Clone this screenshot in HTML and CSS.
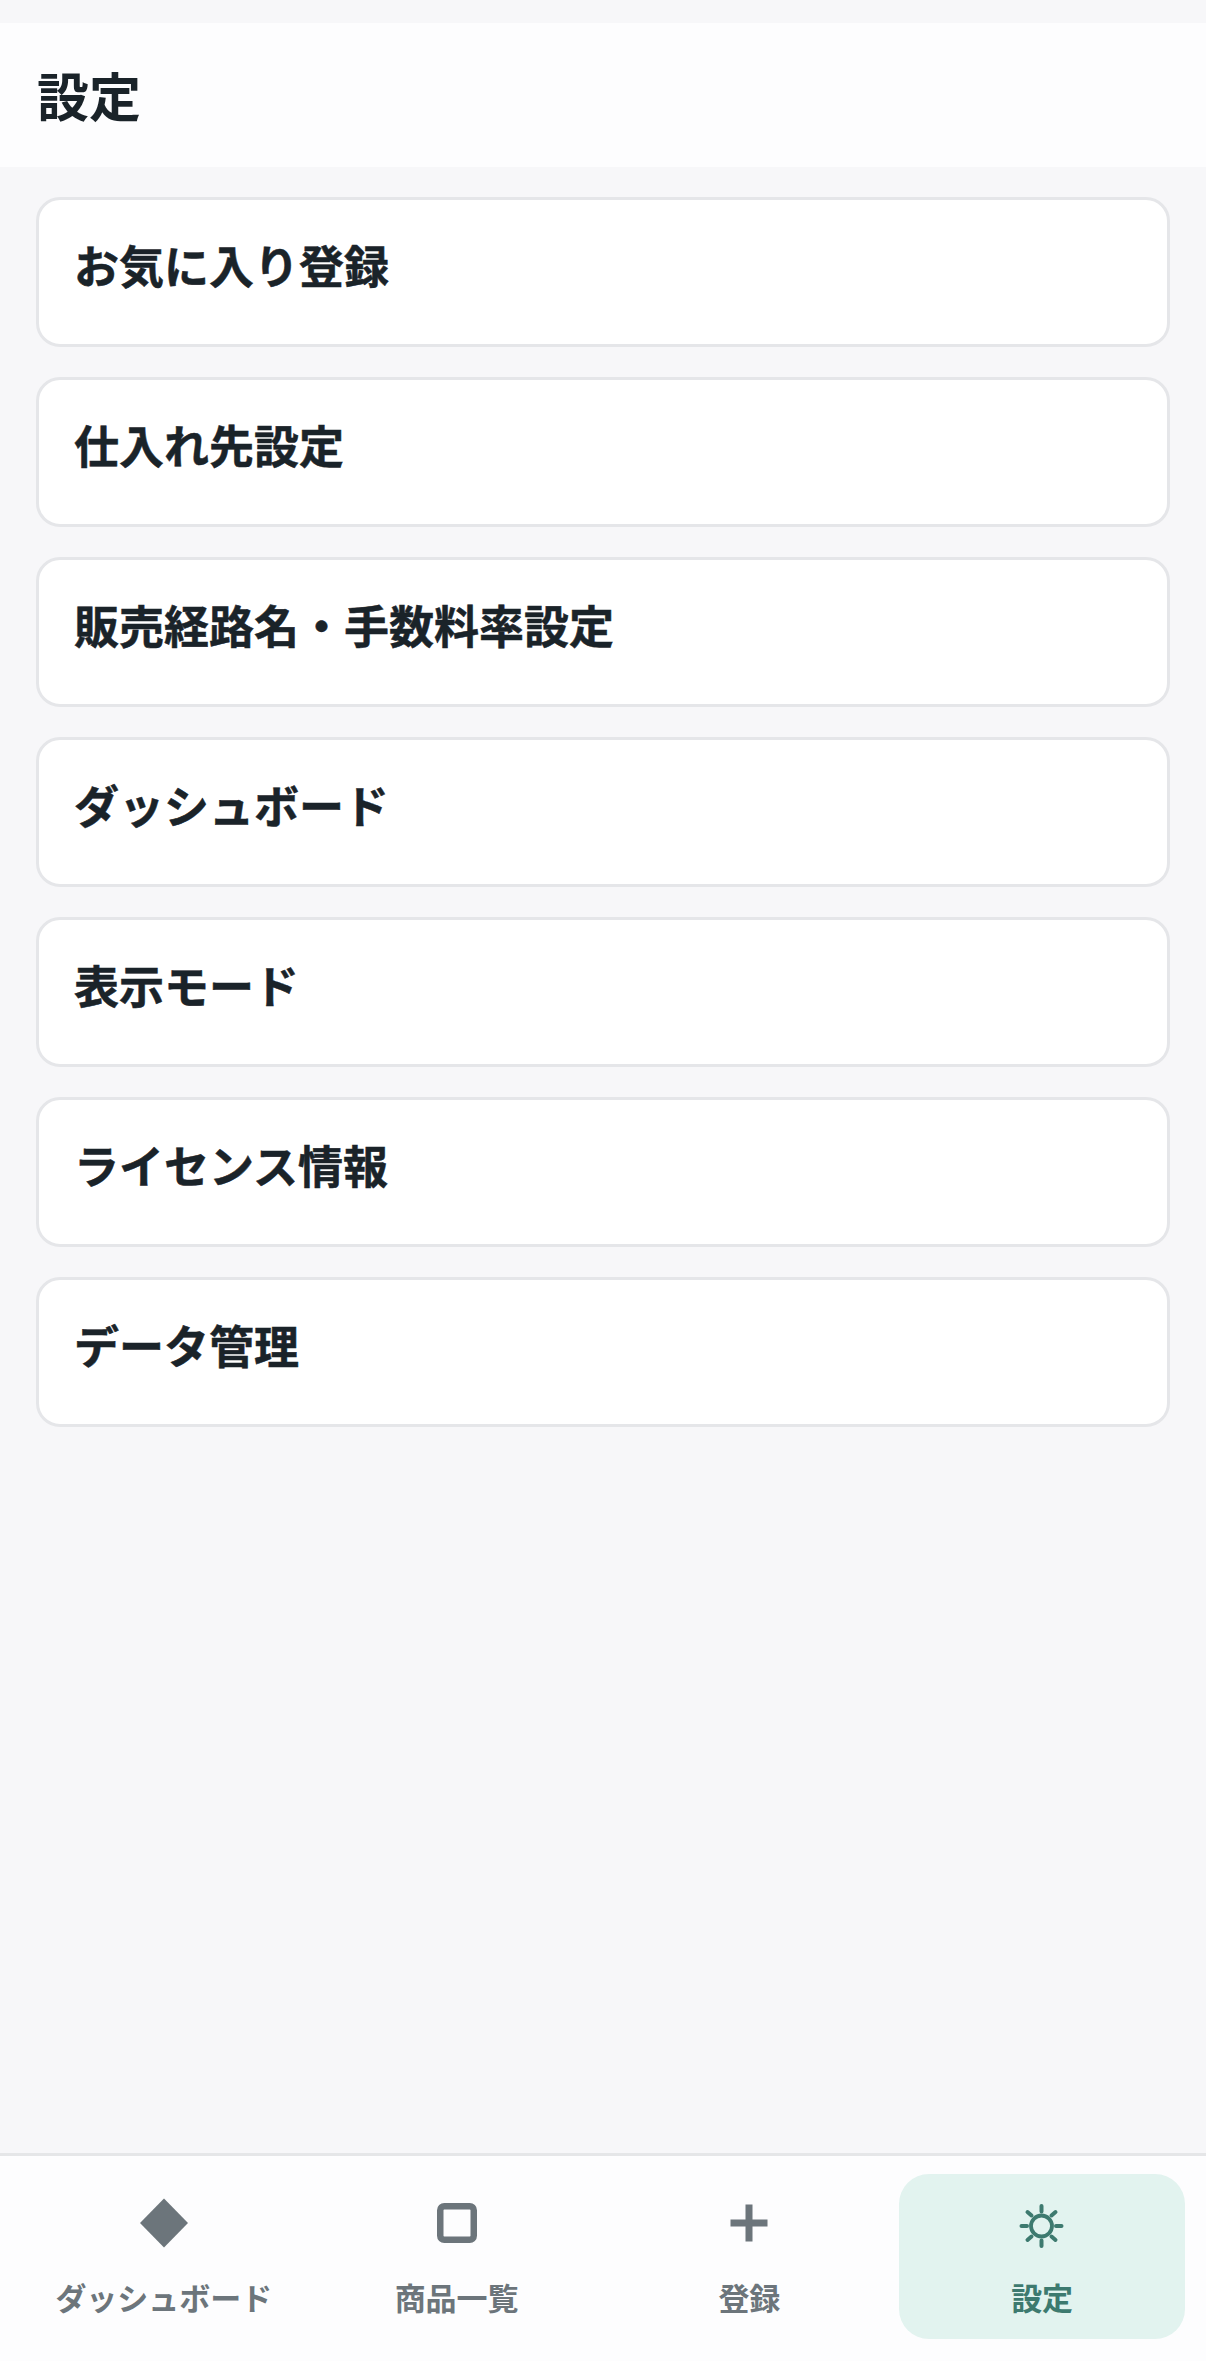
FILE: index.html
```html
<!DOCTYPE html>
<html lang="ja">
<head>
    <meta charset="UTF-8">
    <meta name="viewport" content="width=device-width, initial-scale=1.0">
    <title>設定</title>
    <link rel="stylesheet" href="styles.css">
</head>
<body>
    <header class="page-header">
        <h1>設定</h1>
    </header>

    <main class="menu-list">
        <div class="menu-card">お気に入り登録</div>
        <div class="menu-card">仕入れ先設定</div>
        <div class="menu-card">販売経路名・手数料率設定</div>
        <div class="menu-card">ダッシュボード</div>
        <div class="menu-card">表示モード</div>
        <div class="menu-card">ライセンス情報</div>
        <div class="menu-card">データ管理</div>
    </main>

    <nav class="tab-bar">
        <div class="tab">
            <svg class="tab-icon" viewBox="0 0 60 60"><path d="M30 5.500 54 30 30 54.500 6 30Z" fill="currentColor"/></svg>
            <span class="tab-label">ダッシュボード</span>
        </div>
        <div class="tab">
            <svg class="tab-icon" viewBox="0 0 60 60"><rect x="13.250" y="13.250" width="33.500" height="33.500" rx="4" fill="none" stroke="currentColor" stroke-width="6.500"/></svg>
            <span class="tab-label">商品一覧</span>
        </div>
        <div class="tab">
            <svg class="tab-icon" viewBox="0 0 60 60"><path d="M30 11.500V48.500M11.500 30H48.500" fill="none" stroke="currentColor" stroke-width="7"/></svg>
            <span class="tab-label">登録</span>
        </div>
        <div class="tab tab-active">
            <svg class="tab-icon" viewBox="0 0 60 60" fill="none" stroke="currentColor" stroke-linecap="round">
                <circle cx="29.500" cy="33" r="10.500" stroke-width="3.800"/>
                <path d="M29.500 13V18.500M29.500 47.500V53M9.500 33H15M44 33H49.500M15.500 19 19.500 22.500M43.500 19 39.500 22.500M15.500 47 19.500 43.500M43.500 47 39.500 43.500" stroke-width="4"/>
            </svg>
            <span class="tab-label">設定</span>
        </div>
    </nav>
</body>
</html>
```

FILE: styles.css
```css
* {
    box-sizing: border-box;
}
body {
    margin: 0;
    min-height: 100vh;
    padding-top: 23px;
    display: flex;
    flex-direction: column;
    background-color: #f7f7f9;
    color: #1a2329;
    font-family: "Noto Sans CJK JP", "Noto Sans", sans-serif;
}
.page-header {
    height: 144px;
    padding: 0 37px;
    display: flex;
    align-items: center;
    background-color: #fdfdfe;
}
.page-header h1 {
    margin: 0;
    font-size: 52px;
    line-height: 60px;
    font-weight: 700;
}
.menu-list {
    padding: 30px 36px;
    display: flex;
    flex-direction: column;
    gap: 30px;
}
.menu-card {
    height: 150px;
    padding: 35px 35px 0;
    background-color: #fff;
    border: 3px solid #e5e6e9;
    border-radius: 24px;
    font-size: 45px;
    line-height: 60px;
    font-weight: 700;
    -webkit-text-stroke: 0.5px currentColor;
}
.tab-bar {
    margin-top: auto;
    height: 208px;
    padding: 18px 21px 22px;
    display: flex;
    gap: 7px;
    background-color: #fdfdfe;
    border-top: 3px solid #e5e6e8;
}
.tab {
    flex: 1;
    display: flex;
    flex-direction: column;
    align-items: center;
    padding-top: 19px;
    color: #6c757b;
    border-radius: 30px;
}
.tab-active {
    background-color: #e2f3ef;
    color: #3d7a6f;
}
.tab-icon {
    width: 60px;
    height: 60px;
}
.tab-label {
    margin-top: 24px;
    font-size: 31px;
    line-height: 40px;
    font-weight: 700;
}
```
